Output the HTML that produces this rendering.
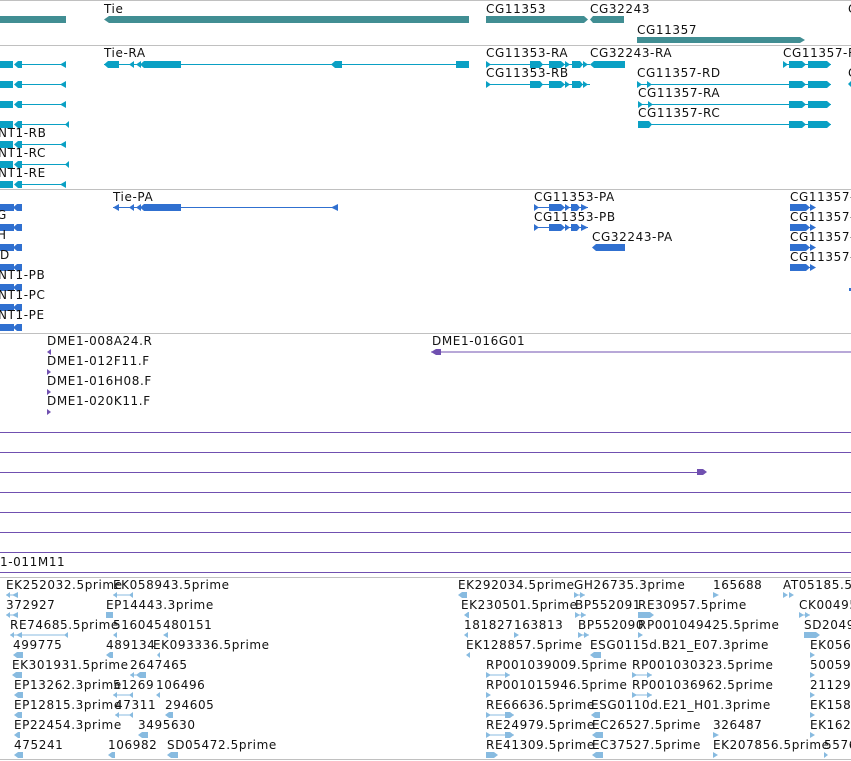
<!DOCTYPE html>
<html><head><meta charset="utf-8"><style>
html,body{margin:0;padding:0;background:#fff;width:851px;height:761px;overflow:hidden}
svg{display:block}
text{font-family:"DejaVu Sans","Liberation Sans",sans-serif;font-size:12px;letter-spacing:0.6px;fill:#111}
.g{fill:#418e93}.t{fill:#0aa0c4}.p{fill:#3070d0}.v{fill:#7050b0}.e{fill:#88bbe0}
</style></head><body>
<svg width="851" height="761" viewBox="0 0 851 761" xmlns="http://www.w3.org/2000/svg">
<g fill="#c0c0c0">
<rect x="0" y="0" width="851" height="1"/>
<rect x="0" y="45" width="851" height="1"/>
<rect x="0" y="189" width="851" height="1"/>
<rect x="0" y="333" width="851" height="1"/>
<rect x="0" y="577" width="851" height="1"/>
<rect x="0" y="759" width="851" height="1"/>
</g>

<text x="104" y="13">Tie</text>
<text x="486" y="13">CG11353</text>
<text x="590" y="13">CG32243</text>
<text x="637" y="34">CG11357</text>
<text x="848" y="13">C</text>
<g class="g">
<rect x="0" y="16" width="66" height="7"/>
<polygon points="104,19.5 109,16 469,16 469,23 109,23"/>
<polygon points="486,16 584,16 588,19.5 584,23 486,23"/>
<polygon points="590,19.5 593,16 624,16 624,23 593,23"/>
<polygon points="637,37 800,37 805,40 800,43 637,43"/>
</g>

<g class="t">
<g id="tl"><rect x="0" y="61" width="13" height="7"/><polygon points="14,64.5 18,61 22,61 22,68 18,68"/><rect x="18" y="64" width="48" height="1"/><polygon points="60,64.5 66,61 66,68"/></g>
<use href="#tl" y="20"/><use href="#tl" y="40"/>
<g transform="translate(0,60)"><rect x="0" y="61" width="13" height="7"/><polygon points="14,64.5 18,61 22,61 22,68 18,68"/><rect x="18" y="64" width="51" height="1"/><polygon points="65,64.5 69,61 69,68"/></g>
<use href="#tl" y="80"/>
<g transform="translate(0,100)"><rect x="0" y="61" width="13" height="7"/><polygon points="14,64.5 18,61 22,61 22,68 18,68"/><rect x="18" y="64" width="51" height="1"/><polygon points="65,64.5 69,61 69,68"/></g>
<use href="#tl" y="120"/>
<polygon points="104,64.5 108,61 119,61 119,68 108,68"/>
<rect x="104" y="64" width="365" height="1"/>
<polygon points="129,64.5 134,61 134,68"/><polygon points="136,64.5 141,61 141,68"/>
<polygon points="140,64.5 144,61 181,61 181,68 144,68"/>
<polygon points="331,64.5 335,61 342,61 342,68 335,68"/>
<rect x="456" y="61" width="13" height="7"/>
<g id="cg53"><polygon points="486,61 491,64.5 486,68"/><rect x="486" y="64" width="104" height="1"/>
<polygon points="530,61 540,61 543,64.5 540,68 530,68"/><polygon points="549,61 561,61 565,64.5 561,68 549,68"/>
<polygon points="565,61 570,64.5 565,68"/><polygon points="572,61 580,61 583,64.5 580,68 572,68"/><polygon points="583,61 588,64.5 583,68"/></g>
<use href="#cg53" y="20"/>
<polygon points="590,64.5 594,61 625,61 625,68 594,68"/>
<polygon points="783,61 788,64.5 783,68"/><rect x="783" y="64" width="48" height="1"/>
<g id="ex57"><polygon points="789,61 802,61 806,64.5 802,68 789,68"/><polygon points="808,61 827,61 831,64.5 827,68 808,68"/></g>
<g transform="translate(0,20)"><polygon points="637,61 642,64.5 637,68"/><polygon points="647,61 652,64.5 647,68"/><rect x="637" y="64" width="194" height="1"/><use href="#ex57"/></g>
<g transform="translate(0,40)"><polygon points="638,61 643,64.5 638,68"/><polygon points="648,61 653,64.5 648,68"/><rect x="638" y="64" width="193" height="1"/><use href="#ex57"/></g>
<g transform="translate(0,60)"><polygon points="638,61 649,61 652,64.5 649,68 638,68"/><rect x="638" y="64" width="193" height="1"/><use href="#ex57"/></g>
<polygon points="848,84 851,81 851,87"/>
</g>
<text x="104" y="57">Tie-RA</text>
<text x="486" y="57">CG11353-RA</text>
<text x="590" y="57">CG32243-RA</text>
<text x="783" y="57">CG11357-RA</text>
<text x="486" y="77">CG11353-RB</text>
<text x="637" y="77">CG11357-RD</text>
<text x="638" y="97">CG11357-RA</text>
<text x="638" y="117">CG11357-RC</text>
<text x="-2" y="137">NT1-RB</text>
<text x="-2" y="157">NT1-RC</text>
<text x="-2" y="177">NT1-RE</text>
<text x="848" y="77">C</text>

<g class="p">
<g id="pl"><rect x="0" y="204" width="14" height="7"/><polygon points="13,207.5 17,204 22,204 22,211 17,211"/></g>
<use href="#pl" y="20"/><use href="#pl" y="40"/><use href="#pl" y="60"/><use href="#pl" y="80"/><use href="#pl" y="100"/><use href="#pl" y="120"/>
<polygon points="113,207.5 119,204 119,211"/><rect x="113" y="207" width="225" height="1"/>
<polygon points="129,207.5 134,204 134,211"/><polygon points="136,207.5 141,204 141,211"/>
<polygon points="140,207.5 144,204 181,204 181,211 144,211"/>
<polygon points="331,207.5 338,204 338,211"/>
<g id="pp53"><polygon points="534,204 539,207.5 534,211"/><rect x="534" y="207" width="54" height="1"/>
<polygon points="549,204 561,204 565,207.5 561,211 549,211"/><polygon points="565,204 570,207.5 565,211"/><polygon points="571,204 577,204 580,207.5 577,211 571,211"/><polygon points="581,204 588,207.5 581,211"/></g>
<use href="#pp53" y="20"/>
<polygon points="592,247.5 596,244 625,244 625,251 596,251"/>
<g id="pp57"><polygon points="790,204 806,204 810,207.5 806,211 790,211"/><rect x="806" y="207" width="4" height="1"/><polygon points="810,204 816,207.5 810,211"/></g>
<use href="#pp57" y="20"/><use href="#pp57" y="40"/><use href="#pp57" y="60"/>
<rect x="849" y="288" width="2" height="3"/>
</g>
<text x="113" y="201">Tie-PA</text>
<text x="534" y="201">CG11353-PA</text>
<text x="534" y="221">CG11353-PB</text>
<text x="592" y="241">CG32243-PA</text>
<text x="790" y="201">CG11357-PA</text>
<text x="790" y="221">CG11357-PB</text>
<text x="790" y="241">CG11357-PC</text>
<text x="790" y="261">CG11357-PD</text>
<text x="-3" y="219">G</text>
<text x="-3" y="239">H</text>
<text x="0" y="259">D</text>
<text x="-2" y="279">NT1-PB</text>
<text x="-2" y="299">NT1-PC</text>
<text x="-2" y="319">NT1-PE</text>

<text x="47" y="345">DME1-008A24.R</text>
<text x="47" y="365">DME1-012F11.F</text>
<text x="47" y="385">DME1-016H08.F</text>
<text x="47" y="405">DME1-020K11.F</text>
<text x="432" y="345">DME1-016G01</text>
<text x="0" y="566">1-011M11</text>
<g class="v">
<polygon points="47,352 51,349 51,355"/>
<polygon points="47,369 51,372 47,375"/>
<polygon points="47,389 51,392 47,395"/>
<polygon points="47,409 51,412 47,415"/>
<polygon points="431,352 436,349 441,349 441,355 436,355"/><rect x="431" y="351.5" width="420" height="1"/>
<rect x="0" y="432" width="851" height="1"/>
<rect x="0" y="452" width="851" height="1"/>
<rect x="0" y="472" width="700" height="1"/><polygon points="697,469 703,469 707,472 703,475 697,475"/>
<rect x="0" y="492" width="851" height="1"/>
<rect x="0" y="512" width="851" height="1"/>
<rect x="0" y="532" width="851" height="1"/>
<rect x="0" y="552" width="851" height="1"/>
<rect x="0" y="572" width="851" height="1"/>
</g>

<g>
<text x="6" y="589">EK252032.5prime</text><text x="113" y="589">EK058943.5prime</text>
<text x="458" y="589">EK292034.5prime</text><text x="574" y="589">GH26735.3prime</text><text x="713" y="589">165688</text><text x="783" y="589">AT05185.5prime</text>
<text x="6" y="609">372927</text><text x="106" y="609">EP14443.3prime</text>
<text x="461" y="609">EK230501.5prime</text><text x="575" y="609">BP552091</text><text x="638" y="609">RE30957.5prime</text><text x="799" y="609">CK00495</text>
<text x="10" y="629">RE74685.5prime</text><text x="113" y="629">516045</text><text x="163" y="629">480151</text>
<text x="464" y="629">181827</text><text x="514" y="629">163813</text><text x="578" y="629">BP552090</text><text x="638" y="629">RP001049425.5prime</text><text x="804" y="629">SD2049</text>
<text x="13" y="649">499775</text><text x="106" y="649">489134</text><text x="153" y="649">EK093336.5prime</text>
<text x="466" y="649">EK128857.5prime</text><text x="590" y="649">ESG0115d.B21_E07.3prime</text><text x="810" y="649">EK0564</text>
<text x="12" y="669">EK301931.5prime</text><text x="130" y="669">2647465</text>
<text x="486" y="669">RP001039009.5prime</text><text x="632" y="669">RP001030323.5prime</text><text x="810" y="669">50059</text>
<text x="14" y="689">EP13262.3prime</text><text x="113" y="689">51269</text><text x="156" y="689">106496</text>
<text x="486" y="689">RP001015946.5prime</text><text x="632" y="689">RP001036962.5prime</text><text x="810" y="689">21129</text>
<text x="14" y="709">EP12815.3prime</text><text x="115" y="709">47311</text><text x="165" y="709">294605</text>
<text x="486" y="709">RE66636.5prime</text><text x="591" y="709">ESG0110d.E21_H01.3prime</text><text x="810" y="709">EK1587</text>
<text x="14" y="729">EP22454.3prime</text><text x="138" y="729">3495630</text>
<text x="486" y="729">RE24979.5prime</text><text x="592" y="729">EC26527.5prime</text><text x="713" y="729">326487</text><text x="810" y="729">EK1626</text>
<text x="14" y="749">475241</text><text x="108" y="749">106982</text><text x="167" y="749">SD05472.5prime</text>
<text x="486" y="749">RE41309.5prime</text><text x="592" y="749">EC37527.5prime</text><text x="713" y="749">EK207856.5prime</text><text x="824" y="749">5576</text>
</g>
<g class="e">
<polygon points="6,595 10,592 10,598"/><polygon points="12,595 18,592 18,598"/><rect x="6" y="594.5" width="12" height="1"/>
<polygon points="113,595 117,592 117,598"/><rect x="113" y="594.5" width="20" height="1"/><polygon points="129,595 133,592 133,598"/>
<polygon points="458,595 462,592 467,592 467,598 462,598"/>
<polygon points="574,592 579,595 574,598"/><polygon points="580,592 585,595 580,598"/><rect x="574" y="594.5" width="11" height="1"/>
<polygon points="713,592 719,595 713,598"/>
<polygon points="783,592 788,595 783,598"/><polygon points="789,592 794,595 789,598"/>
<polygon points="6,615 10,612 10,618"/><polygon points="12,615 18,612 18,618"/><rect x="6" y="614.5" width="12" height="1"/>
<polygon points="106,612 113,612 113,618 106,618"/>
<polygon points="464,615 468,612 469,612 469,618 468,618"/>
<polygon points="575,612 580,615 575,618"/><polygon points="581,612 586,615 581,618"/><rect x="575" y="614.5" width="11" height="1"/>
<polygon points="638,612 650,612 654,615 650,618 638,618"/>
<polygon points="799,612 804,615 799,618"/><polygon points="805,612 810,615 805,618"/><rect x="799" y="614.5" width="11" height="1"/>
<polygon points="10,635 14,632 14,638"/><polygon points="16,635 22,632 22,638"/><rect x="10" y="634.5" width="58" height="1"/><polygon points="64,635 68,632 68,638"/>
<polygon points="113,635 117,632 117,638"/><polygon points="163,635 168,632 168,638"/>
<polygon points="464,635 468,632 468,638"/><polygon points="514,632 519,635 514,638"/>
<polygon points="578,632 583,635 578,638"/><polygon points="584,632 589,635 584,638"/><rect x="578" y="634.5" width="11" height="1"/>
<polygon points="638,632 643,635 638,638"/>
<polygon points="804,632 816,632 820,635 816,638 804,638"/>
<polygon points="13,655 17,652 23,652 23,658 17,658"/>
<polygon points="106,655 110,652 113,652 113,658 110,658"/><polygon points="157,655 160,652 160,658"/>
<polygon points="466,655 470,652 470,658"/>
<polygon points="590,655 594,652 601,652 601,658 594,658"/>
<polygon points="810,652 815,655 810,658"/>
<polygon points="12,675 16,672 22,672 22,678 16,678"/>
<polygon points="130,675 134,672 134,678"/><polygon points="136,675 140,672 146,672 146,678 140,678"/><rect x="130" y="674.5" width="16" height="1"/>
<polygon points="486,672 491,675 486,678"/><rect x="486" y="674.5" width="24" height="1"/><polygon points="505,672 510,675 505,678"/>
<polygon points="632,672 637,675 632,678"/><rect x="632" y="674.5" width="20" height="1"/><polygon points="647,672 652,675 647,678"/>
<polygon points="810,672 815,675 810,678"/>
<polygon points="14,695 18,692 23,692 23,698 18,698"/>
<polygon points="113,695 117,692 117,698"/><rect x="113" y="694.5" width="20" height="1"/><polygon points="129,695 133,692 133,698"/>
<polygon points="156,695 160,692 160,698"/>
<polygon points="486,692 491,695 486,698"/>
<polygon points="632,692 637,695 632,698"/><rect x="632" y="694.5" width="20" height="1"/><polygon points="647,692 652,695 647,698"/>
<polygon points="810,692 815,695 810,698"/>
<polygon points="14,715 18,712 22,712 22,718 18,718"/>
<polygon points="115,715 119,712 119,718"/><rect x="115" y="714.5" width="18" height="1"/><polygon points="129,715 133,712 133,718"/>
<polygon points="165,715 169,712 173,712 173,718 169,718"/>
<polygon points="486,712 491,715 486,718"/><rect x="486" y="714.5" width="28" height="1"/><polygon points="505,712 510,712 514,715 510,718 505,718"/>
<polygon points="591,715 595,712 600,712 600,718 595,718"/>
<polygon points="810,712 815,715 810,718"/>
<polygon points="14,735 18,732 20,732 20,738 18,738"/>
<polygon points="138,735 142,732 148,732 148,738 142,738"/>
<polygon points="486,732 491,735 486,738"/><rect x="486" y="734.5" width="28" height="1"/><polygon points="505,732 510,732 514,735 510,738 505,738"/>
<polygon points="592,735 596,732 603,732 603,738 596,738"/>
<polygon points="713,732 719,735 713,738"/>
<polygon points="810,732 815,735 810,738"/>
<polygon points="14,755 18,752 23,752 23,758 18,758"/>
<polygon points="108,755 112,752 115,752 115,758 112,758"/>
<polygon points="167,755 171,752 178,752 178,758 171,758"/>
<polygon points="486,752 494,752 498,755 494,758 486,758"/>
<polygon points="592,755 596,752 603,752 603,758 596,758"/>
<polygon points="713,752 718,755 713,758"/>
<polygon points="824,752 828,755 824,758"/>
</g>
</svg>
</body></html>
